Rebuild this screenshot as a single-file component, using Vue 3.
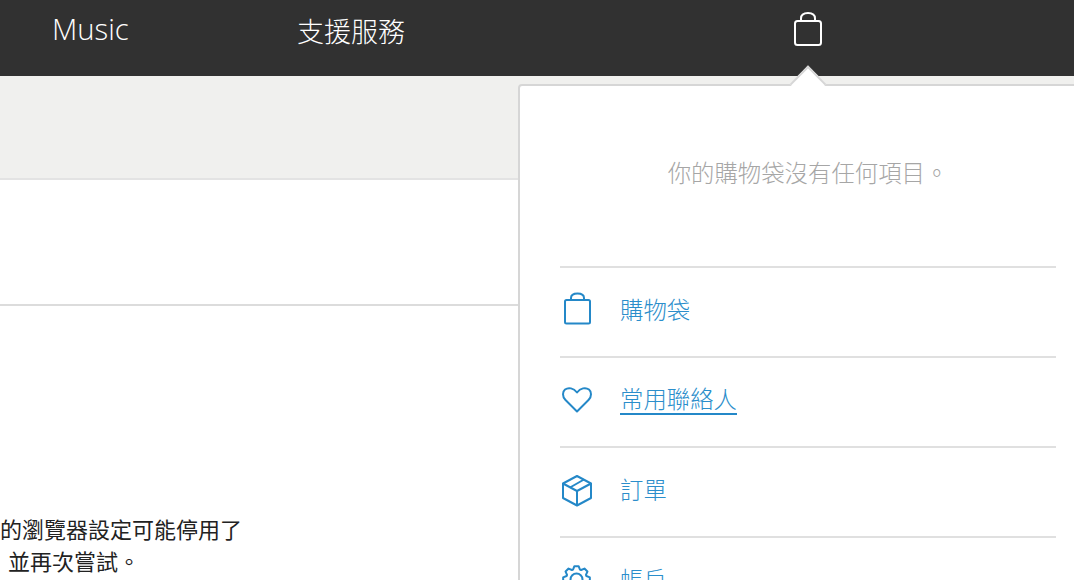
<template>
  <div class="page">
    <header class="topbar">
      <a class="nav-link nav-music">Music</a>
      <a class="nav-link nav-support">支援服務</a>
      <a class="nav-bag">
        <svg viewBox="0 0 28 34" width="28" height="34" fill="none" stroke="#fff" stroke-width="2">
          <path d="M7 9V6.500C7 3 9.500 1 14 1s7 2 7 5.500V9" />
          <rect x="1" y="9" width="26" height="24" rx="2.500" />
        </svg>
      </a>
    </header>

    <main class="content">
      <div class="band"></div>
      <div class="blank-row"></div>
      <div class="notice">
        <p>的瀏覽器設定可能停用了</p>
        <p class="second">並再次嘗試。</p>
      </div>
    </main>

    <aside class="bag-panel">
      <span class="arrow"></span>
      <p class="empty">你的購物袋沒有任何項目。</p>
      <ul class="menu">
        <li v-for="item in items" :key="item.label" class="menu-row">
          <svg class="menu-icon" viewBox="0 0 34 40" fill="none" stroke="#2488c8" stroke-width="2" stroke-linejoin="round">
            <path v-for="d in item.paths" :key="d" :d="d" />
          </svg>
          <a class="menu-link" :class="{ active: item.active }">{{ item.label }}</a>
        </li>
      </ul>
    </aside>
  </div>
</template>

<script setup>
// 8-tooth gear outline around (cx, cy)
const gearPath = (cx, cy, outer, inner) => {
  const pts = [];
  for (let i = 0; i < 8; i++) {
    const a = (i * Math.PI) / 4;
    const w = Math.PI / 14;
    pts.push([a - w * 1.5, inner], [a - w * 0.7, outer], [a + w * 0.7, outer], [a + w * 1.5, inner]);
  }
  const coords = pts.map(([a, r]) => `${(cx + r * Math.sin(a)).toFixed(2)} ${(cy - r * Math.cos(a)).toFixed(2)}`);
  return `M${coords.join("L")}z`;
};

const items = [
  {
    label: "購物袋",
    paths: [
      "M11 8V6C11 3 13 1.500 17.500 1.500S24 3 24 6v2",
      "M5 9.500a1.500 1.500 0 0 1 1.500-1.500h22a1.500 1.500 0 0 1 1.500 1.500V30a1.500 1.500 0 0 1-1.500 1.500h-22A1.500 1.500 0 0 1 5 30z",
    ],
  },
  {
    label: "常用聯絡人",
    active: true,
    paths: [
      "M17 29.500L5.500 18C2 14.500 2.500 9.500 5 7.500c3.500-2.500 8.500-1.500 12 3 3.500-4.500 8.500-5.500 12-3 2.500 2 3 7-.5 10.500z",
    ],
  },
  {
    label: "訂單",
    paths: [
      "M17 4l14 7.500V26l-14 7.500L3 26V11.500z",
      "M3 11.500L17 19l14-7.500",
      "M17 19v14.500",
      "M10 15.500L24 7.500",
    ],
  },
  {
    label: "帳戶",
    paths: [
      gearPath(16.5, 17.5, 13.5, 10.5),
      "M16.500 11.500a6 6 0 1 0 0 12 6 6 0 0 0 0-12z",
    ],
  },
];
</script>

<style>
html,
body {
  margin: 0;
  background: #fff;
  overflow: hidden;
}
</style>

<style scoped>
.page {
  position: relative;
  width: 1074px;
  height: 580px;
  overflow: hidden;
  font-family: "Noto Sans CJK TC", "Noto Sans", sans-serif;
}

.topbar {
  display: flex;
  align-items: center;
  height: 76px;
  background: #313131;
  color: #fff;
}

.nav-link {
  font-size: 27px;
  font-weight: 300;
  line-height: 1;
  flex: none;
}

.nav-music {
  font-family: "Open Sans", "Noto Sans CJK TC", sans-serif;
  width: 297px;
  padding-left: 52px;
  box-sizing: border-box;
  font-size: 29.3px;
  margin-top: -17px;
}

.nav-support {
  width: 497px;
  margin-top: -15px;
}

.nav-bag {
  display: flex;
  margin-top: -18px;
}

.content {
  display: flex;
  flex-direction: column;
}

.band {
  height: 102px;
  background: #f0f0ee;
  border-bottom: 2px solid #e3e3e3;
}

.blank-row {
  height: 124px;
  border-bottom: 2px solid #dcdcdc;
}

.notice {
  padding-top: 206px;
  font-size: 22px;
  line-height: 32px;
  color: #222;
}

.notice p {
  margin: 0;
  white-space: nowrap;
}

.notice .second {
  padding-left: 8px;
}

.bag-panel {
  position: absolute;
  left: 518px;
  top: 84px;
  width: 600px;
  height: 520px;
  box-sizing: border-box;
  padding: 0 18px 0 40px;
  background: #fff;
  border: 2px solid #d6d6d6;
  border-radius: 4px;
}

.arrow {
  position: absolute;
  left: 275px;
  top: -15px;
  width: 24px;
  height: 24px;
  background: #fff;
  border-top: 2px solid #d6d6d6;
  border-left: 2px solid #d6d6d6;
  transform: rotate(45deg);
}

.empty {
  margin: 0;
  width: 496px;
  height: 180px;
  padding-top: 69px;
  box-sizing: border-box;
  text-align: center;
  font-size: 23.4px;
  font-weight: 300;
  line-height: 34px;
  color: #a6a6a6;
}

.menu {
  list-style: none;
  margin: 0;
  padding: 0;
  width: 496px;
}

.menu-row {
  display: flex;
  align-items: center;
  gap: 26px;
  height: 88px;
  border-top: 2px solid #e0e0e0;
}

.menu-icon {
  width: 34px;
  height: 40px;
  flex: none;
}

.menu-link {
  font-size: 23.4px;
  font-weight: 300;
  line-height: 30px;
  margin-bottom: 6px;
  color: #2b8ecb;
}

.menu-link.active {
  border-bottom: 2px solid #2488c8;
}
</style>
